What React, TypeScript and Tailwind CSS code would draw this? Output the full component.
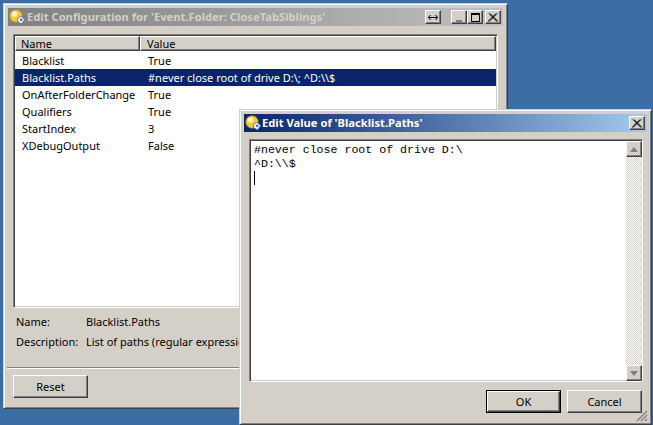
const raised = 'border border-t-white border-l-white border-r-[#404040] border-b-[#404040] shadow-[inset_-1px_-1px_0_#808080] bg-[#d4d0c8]';
const windowFrame = 'absolute flex flex-col border border-t-[#d4d0c8] border-l-[#d4d0c8] border-r-[#404040] border-b-[#404040] shadow-[inset_1px_1px_0_#fff,inset_-1px_-1px_0_#808080] bg-[#d4d0c8] p-[3px]';
const sunken = 'border border-t-[#808080] border-l-[#808080] border-r-white border-b-white shadow-[inset_1px_1px_0_#404040,inset_-1px_-1px_0_#d4d0c8]';

const rows = [
  { name: 'Blacklist', value: 'True' },
  { name: 'Blacklist.Paths', value: '#never close root of drive D:\\; ^D:\\\\$', selected: true },
  { name: 'OnAfterFolderChange', value: 'True' },
  { name: 'Qualifiers', value: 'True' },
  { name: 'StartIndex', value: '3' },
  { name: 'XDebugOutput', value: 'False' },
];

function AppIcon() {
  return (
    <svg width="16" height="16" viewBox="0 0 16 16" className="shrink-0">
      <circle cx="7" cy="7" r="6.2" fill="#f6c93a" stroke="#b98a16" strokeWidth="0.6" />
      <circle cx="5.5" cy="5" r="2.8" fill="#fff3b5" />
      <path d="M8.5 9.5 L12 7 L15.8 10.5 L12.5 15 L8.5 12.5 Z" fill="#eef0fa" stroke="#5a62a8" strokeWidth="0.8" />
      <circle cx="12.2" cy="10.8" r="1.3" fill="#5a62a8" />
    </svg>
  );
}

function CaptionButton({ children, className = '' }: { children: React.ReactNode; className?: string }) {
  return (
    <div className={`${raised} flex h-[14px] w-[16px] items-center justify-center ${className}`}>
      {children}
    </div>
  );
}

function CloseGlyph() {
  return (
    <svg width="10" height="9" viewBox="0 0 10 9">
      <path d="M1 0.5 L9 8.5 M9 0.5 L1 8.5 M2 0.5 L10 8.5 M8 0.5 L0 8.5" stroke="#000" strokeWidth="1" />
    </svg>
  );
}

function DialogButton({ label, isDefault }: { label: string; isDefault?: boolean }) {
  return (
    <div className={`flex h-[23px] w-[75px] items-center justify-center ${isDefault ? 'border border-black' : ''}`}>
      <div className={`${raised} flex h-full w-full items-center justify-center text-black`}>{label}</div>
    </div>
  );
}

function Arrow({ up }: { up?: boolean }) {
  return (
    <svg width="8" height="5" viewBox="0 0 8 5">
      <path d={up ? 'M4 0 L8 5 L0 5 Z' : 'M0 0 L8 0 L4 5 Z'} fill="#808080" />
    </svg>
  );
}

export default function App() {
  return (
    <div className="relative h-[425px] w-[653px] overflow-hidden bg-[#3a6ea5] font-['Noto_Sans','DejaVu_Sans',sans-serif] text-[11px] leading-none text-black">
      <div className={`${windowFrame} left-[3px] top-[3px] h-[406px] w-[505px]`}>
        <div className="m-px flex h-[18px] shrink-0 items-center gap-[2px] bg-gradient-to-r from-[#808080] to-[#c0c0c0] pl-[1px] pr-[2px]">
          <AppIcon />
          <span className="whitespace-nowrap text-[11.2px] font-bold text-[#d4d0c8]">Edit Configuration for 'Event.Folder: CloseTabSiblings'</span>
          <div className="ml-auto flex items-center">
            <CaptionButton className="mr-[10px]">
              <svg width="10" height="7" viewBox="0 0 10 7">
                <path d="M0 3.5 H10 M2.5 1 L0.5 3.5 L2.5 6 M7.5 1 L9.5 3.5 L7.5 6" stroke="#000" fill="none" strokeWidth="1" />
              </svg>
            </CaptionButton>
            <CaptionButton>
              <div className="mt-[7px] h-[2px] w-[6px] bg-[#808080]" />
            </CaptionButton>
            <CaptionButton className="mr-[2px]">
              <div className="h-[9px] w-[9px] border border-t-2 border-black" />
            </CaptionButton>
            <CaptionButton>
              <CloseGlyph />
            </CaptionButton>
          </div>
        </div>

        <div className={`${sunken} mx-[6px] mt-[7px] h-[274px] bg-white p-px`}>
          <div className="mb-px flex h-[15px]">
            <div className={`${raised} flex w-[125px] items-center pl-[5px]`}>Name</div>
            <div className={`${raised} flex flex-1 items-center pl-[6px]`}>Value</div>
          </div>
          {rows.map((row) => (
            <div key={row.name} className={`flex h-[17px] items-center ${row.selected ? 'bg-[#0a246a] text-white' : ''}`}>
              <span className="w-[125px] pl-[7px]">{row.name}</span>
              <span className="pl-[8px]">{row.value}</span>
            </div>
          ))}
        </div>

        <div className="mx-[7px] mt-[7px] flex h-[12px] items-center">
          <span className="w-[72px] pl-[2px]">Name:</span>
          <span>Blacklist.Paths</span>
        </div>
        <div className="mx-[7px] mt-[8px] flex h-[12px] items-center">
          <span className="w-[72px] pl-[2px]">Description:</span>
          <span className="whitespace-nowrap">List of paths (regular expressions)</span>
        </div>

        <div className="mt-[20px] h-[2px] border-t border-b border-t-[#808080] border-b-white" />
        <div className="mx-[6px] mt-[6px]">
          <DialogButton label="Reset" />
        </div>
      </div>

      <div className={`${windowFrame} left-[239px] top-[109px] h-[316px] w-[413px]`}>
        <div className="m-px flex h-[18px] shrink-0 items-center gap-px bg-gradient-to-r from-[#0a246a] to-[#a6caf0] pl-[1px] pr-[2px]">
          <AppIcon />
          <span className="whitespace-nowrap text-[11.2px] font-bold text-white">Edit Value of 'Blacklist.Paths'</span>
          <CaptionButton className="ml-auto">
            <CloseGlyph />
          </CaptionButton>
        </div>

        <div className={`${sunken} ml-[6px] mr-[5px] mt-[6px] flex h-[243px] bg-white pl-px pt-px`}>
          <div className="flex-1 pl-[3px] pt-[2px] font-['Liberation_Mono',monospace] text-[11.6px] leading-[14px]">
            <div>#never close root of drive D:\</div>
            <div>^D:\\$</div>
            <div className="h-[14px] w-px bg-black" />
          </div>
          <div className="flex w-[16px] flex-col bg-[repeating-conic-gradient(#d4d0c8_0_25%,#fff_0_50%)] bg-[length:2px_2px]">
            <div className={`${raised} flex h-[16px] shrink-0 items-center justify-center`}><Arrow up /></div>
            <div className="flex-1" />
            <div className={`${raised} flex h-[16px] shrink-0 items-center justify-center`}><Arrow /></div>
          </div>
        </div>

        <div className="relative ml-[5px] mr-[6px] mt-[8px] flex flex-1 justify-end gap-[6px]">
          <DialogButton label="OK" isDefault />
          <DialogButton label="Cancel" />
          <svg width="12" height="12" viewBox="0 0 12 12" className="absolute bottom-[-1px] right-[-6px]">
            <path d="M11 1 L1 11 M11 5 L5 11 M11 9 L9 11" stroke="#808080" strokeWidth="1.4" fill="none" />
          </svg>
        </div>
      </div>
    </div>
  );
}
